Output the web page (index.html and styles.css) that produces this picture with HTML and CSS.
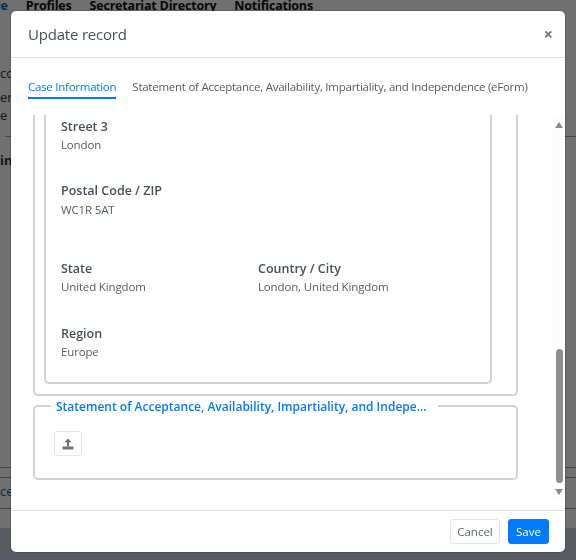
FILE: index.html
```html
<!DOCTYPE html>
<html lang="en">
<head>
    <meta charset="UTF-8">
    <meta name="viewport" content="width=device-width, initial-scale=1.0">
    <title>Update record</title>
    <link rel="stylesheet" href="styles.css">
</head>
<body>
    <!-- Page behind the dialog -->
    <div class="page">
        <nav class="page-nav">
            <span class="page-nav-active">le</span>
            <span>Profiles</span>
            <span>Secretariat Directory</span>
            <span>Notifications</span>
        </nav>
        <div class="page-side">
            <p class="page-side-first">co</p>
            <p>er</p>
            <p>e r</p>
        </div>
        <div class="page-rule"></div>
        <div class="page-in">in</div>
        <div class="page-thin"></div>
        <div class="page-row">ce</div>
        <div class="page-foot"></div>
    </div>

    <div class="backdrop"></div>

    <!-- Dialog -->
    <div class="modal">
        <header class="modal-header">
            <h1>Update record</h1>
            <span class="modal-close">&times;</span>
        </header>

        <div class="modal-tabs">
            <span class="tab tab-active">Case Information</span>
            <span class="tab">Statement of Acceptance, Availability, Impartiality, and Independence (eForm)</span>
        </div>

        <div class="modal-body">
            <div class="scroll-pane">
                <div class="outer-box">
                    <div class="inner-box">
                        <div class="field">
                            <h3>Street 3</h3>
                            <p>London</p>
                        </div>
                        <div class="field field-postal">
                            <h3>Postal Code / ZIP</h3>
                            <p>WC1R 5AT</p>
                        </div>
                        <div class="field-row">
                            <div class="field">
                                <h3>State</h3>
                                <p>United Kingdom</p>
                            </div>
                            <div class="field">
                                <h3>Country / City</h3>
                                <p>London, United Kingdom</p>
                            </div>
                        </div>
                        <div class="field field-region">
                            <h3>Region</h3>
                            <p>Europe</p>
                        </div>
                    </div>
                </div>

                <div class="statement-box">
                    <div class="statement-title">Statement of Acceptance, Availability, Impartiality, and Indepe...</div>
                    <button class="upload-btn" type="button">
                        <svg width="14" height="14" viewBox="0 0 14 14">
                            <path d="M7 1.5 L10.6 5.2 H8 V9.5 H6 V5.2 H3.4 Z" fill="#6c757d"/>
                            <rect x="1.5" y="9.5" width="11" height="3" rx="0.8" fill="#6c757d"/>
                        </svg>
                    </button>
                </div>
            </div>

            <div class="scrollbar">
                <span class="arrow-up"></span>
                <div class="scroll-track"><div class="scroll-thumb"></div></div>
                <span class="arrow-down"></span>
            </div>
        </div>

        <footer class="modal-footer">
            <button class="btn btn-cancel" type="button">Cancel</button>
            <button class="btn btn-save" type="button">Save</button>
        </footer>
    </div>
</body>
</html>
```

FILE: styles.css
```css
/* General Styles */
* {
    box-sizing: border-box;
}

html, body {
    height: 100%;
}

body {
    margin: 0;
    overflow: hidden;
    font-family: "Open Sans", "Noto Sans", Arial, sans-serif;
    color: #495057;
    background-color: #fff;
}

/* Page behind the dialog */
.page {
    height: 560px;
    overflow: hidden;
    background-color: #f8f8f8;
    color: #333;
    font-size: 13px;
}

.page-nav {
    display: flex;
    gap: 18px;
    height: 11px;
    margin-left: -3px;
    line-height: 11px;
    font-size: 12.5px;
    font-weight: 700;
    letter-spacing: -0.2px;
    color: #111;
}

.page-nav-active {
    color: #0a5bb5;
}

.page-side {
    padding-top: 53px;
}

.page-side p {
    margin: 0;
    line-height: 18px;
}

.page-side .page-side-first {
    margin-bottom: 6px;
}

.page-rule {
    height: 1px;
    margin: 12px 0 0 5px;
    background-color: #999;
}

.page-in {
    padding-top: 14px;
    line-height: 18px;
    font-weight: 700;
}

.page-thin {
    height: 10px;
    margin-top: 298px;
    border-top: 1px solid #999;
}

.page-row {
    height: 32px;
    padding-top: 4px;
    color: #0a5bb5;
    border-top: 1px solid #999;
    border-bottom: 1px solid #999;
}

.page-foot {
    height: 32px;
    margin-top: 19px;
    background-color: #c4ccd8;
}

.backdrop {
    position: fixed;
    inset: 0;
    background-color: rgba(0, 0, 0, 0.55);
}

/* Dialog */
.modal {
    position: fixed;
    left: 11px;
    top: 11px;
    width: 554px;
    height: 541px;
    display: flex;
    flex-direction: column;
    background-color: #fff;
    border-radius: 5px;
    box-shadow: 0 0 2px rgba(0, 0, 0, 0.5);
}

.modal-header {
    display: flex;
    align-items: center;
    justify-content: space-between;
    height: 47px;
    padding: 0 12px 0 17px;
    border-bottom: 1px solid #dee2e6;
}

.modal-header h1 {
    margin: 0;
    font-size: 15px;
    font-weight: 500;
    letter-spacing: -0.2px;
    color: #495057;
}

.modal-close {
    font-size: 16px;
    font-weight: 700;
    color: #6c757d;
}

.modal-tabs {
    display: flex;
    gap: 16px;
    height: 57px;
    padding: 21px 0 0 17px;
    font-size: 11.5px;
    letter-spacing: -0.25px;
    color: #555c63;
}

.tab {
    height: 20px;
    line-height: 16px;
    white-space: nowrap;
}

.tab-active {
    color: #007bff;
    border-bottom: 2px solid #007bff;
}

.modal-body {
    display: flex;
    align-items: flex-start;
    height: 395px;
}

.scroll-pane {
    width: 542px;
    height: 385px;
    padding: 0 35px 0 22px;
    overflow: hidden;
}

.outer-box {
    height: 281px;
    padding: 0 24px 0 9px;
    border: 2px solid #ced4da;
    border-top: none;
    border-radius: 0 0 5px 5px;
}

.inner-box {
    height: 269px;
    padding: 3px 0 0 15px;
    border: 2px solid #ced4da;
    border-top: none;
    border-radius: 0 0 5px 5px;
}

.field {
    font-size: 11.5px;
}

.field h3 {
    margin: 0 0 2px;
    font-size: 12.5px;
    line-height: 17px;
    font-weight: 600;
    color: #495057;
}

.field p {
    margin: 0;
    line-height: 16px;
    letter-spacing: -0.15px;
    color: #555c63;
}

.field-postal {
    margin-top: 29px;
}

.field-postal h3 {
    margin-bottom: 3px;
}

.field-row {
    display: grid;
    grid-template-columns: 197px 1fr;
    margin-top: 42px;
}

.field-region {
    margin-top: 30px;
}

.statement-box {
    position: relative;
    height: 75px;
    margin-top: 9px;
    padding: 24px 0 0 19px;
    border: 2px solid #ced4da;
    border-radius: 5px;
}

.statement-title {
    position: absolute;
    left: 16px;
    top: -8px;
    padding: 0 11px 0 5px;
    background-color: #fff;
    font-size: 12px;
    line-height: 16px;
    font-weight: 600;
    color: #007bff;
    white-space: nowrap;
}

.upload-btn {
    display: flex;
    align-items: center;
    justify-content: center;
    width: 28px;
    height: 25px;
    padding: 0;
    background-color: #fff;
    border: 1px solid #e4e6e9;
    border-radius: 3px;
}

/* Scrollbar */
.scrollbar {
    display: flex;
    flex-direction: column;
    align-items: center;
    width: 12px;
    height: 385px;
    padding-top: 7px;
    background-color: #fcfcfc;
}

.arrow-up, .arrow-down {
    width: 0;
    height: 0;
    border-left: 4px solid transparent;
    border-right: 4px solid transparent;
}

.arrow-up {
    border-bottom: 6px solid #8a8a8a;
}

.arrow-down {
    margin-top: 6px;
    border-top: 6px solid #8a8a8a;
}

.scroll-track {
    display: flex;
    align-items: flex-end;
    width: 7px;
    height: 355px;
}

.scroll-thumb {
    width: 7px;
    height: 134px;
    background-color: #8f8f8f;
    border-radius: 4px;
}

/* Footer */
.modal-footer {
    display: flex;
    justify-content: flex-end;
    gap: 8px;
    height: 42px;
    padding: 8px 16px 0 0;
    border-top: 1px solid #dee2e6;
}

.btn {
    height: 25px;
    padding: 0;
    font-family: inherit;
    font-size: 11.5px;
    border-radius: 3px;
}

.btn-cancel {
    width: 50px;
    background-color: #fff;
    border: 1px solid #e4e6e9;
    color: #5f6770;
}

.btn-save {
    width: 41px;
    background-color: #007bff;
    border: 1px solid #007bff;
    color: #fff;
}
```
